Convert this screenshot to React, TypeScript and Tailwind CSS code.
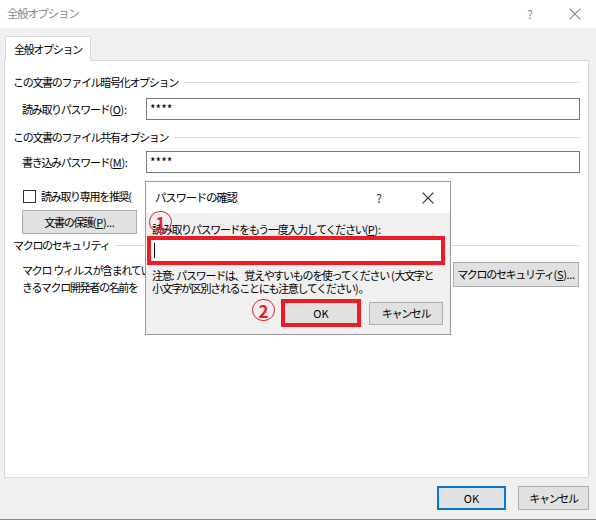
import React from "react";

const F = { fontFamily: "'Noto Sans CJK JP', 'Noto Sans', sans-serif" };

function XIcon({ size = 11, color = "#333" }: { size?: number; color?: string }) {
  return (
    <svg width={size} height={size} viewBox="0 0 10 10">
      <path d="M0.5 0.5 L9.5 9.5 M9.5 0.5 L0.5 9.5" stroke={color} strokeWidth="1" fill="none" />
    </svg>
  );
}

function A({ children }: { children: React.ReactNode }) {
  return <span className="tracking-[-0.3px]">{children}</span>;
}

function SectionHeader({ text, mt }: { text: string; mt: string }) {
  return (
    <div className={`flex items-center h-[14px] ${mt}`}>
      <span className="whitespace-nowrap leading-[14px]">{text}</span>
      <div className="flex-1 h-px bg-[#dcdcdc] ml-[6px]" />
    </div>
  );
}

function Circled({ n }: { n: string }) {
  return (
    <div className="w-[23px] h-[22px] rounded-full border border-[#ec1c24] flex items-center justify-center text-[#ec1c24] text-[17px] font-bold leading-none tracking-normal">
      {n}
    </div>
  );
}

export default function App() {
  return (
    <div
      className="relative w-[596px] h-[520px] overflow-hidden bg-[#f0f0f0] text-[11px] tracking-[-1.3px] text-black border-b border-[#8a8a8a]"
      style={F}
    >
      {/* Title bar */}
      <div className="h-[28px] bg-white flex items-center pl-[7px] pr-[6px]">
        <span className="text-[#8a8a8a] text-[11.5px]">全般オプション</span>
        <div className="ml-auto flex items-center">
          <div className="w-[30px] flex justify-center text-[#8a8a8a] text-[12px] tracking-normal">?</div>
          <div className="w-[30px] flex justify-center ml-[15px]">
            <XIcon size={12} color="#8a8a8a" />
          </div>
        </div>
      </div>

      {/* Body */}
      <div className="pl-[4px] pr-[7px] pt-[8px]">
        {/* Tab */}
        <div className="flex">
          <div className="relative z-10 ml-[1px] -mb-px h-[25px] w-[86px] bg-white border border-b-0 border-[#d9d9d9] flex items-center pl-[8px]">
            全般オプション
          </div>
        </div>
        {/* Panel */}
        <div className="h-[418px] bg-white border border-[#d9d9d9] pl-[8px] pr-[8px]">
          <SectionHeader text="この文書のファイル暗号化オプション" mt="mt-[14px]" />
          <div className="flex items-center mt-[9px] pl-[9px]">
            <span className="w-[124px] whitespace-nowrap">
              読み取りパスワード<A>(<u>O</u>):</A>
            </span>
            <div className="flex-1 h-[22px] border border-[#7a7a7a] bg-white flex items-center pl-[3px] tracking-normal text-[12px]">
              ****
            </div>
          </div>
          <SectionHeader text="この文書のファイル共有オプション" mt="mt-[10px]" />
          <div className="flex items-center mt-[7px] pl-[9px]">
            <span className="w-[124px] whitespace-nowrap">
              書き込みパスワード<A>(<u>M</u>):</A>
            </span>
            <div className="flex-1 h-[22px] border border-[#7a7a7a] bg-white flex items-center pl-[3px] tracking-normal text-[12px]">
              ****
            </div>
          </div>
          <div className="flex items-center mt-[16px] pl-[10px] h-[14px]">
            <div className="w-[13px] h-[13px] border border-[#333] bg-white" />
            <span className="ml-[5px] whitespace-nowrap">
              読み取り専用を推奨<A>(</A>
            </span>
          </div>
          <div className="mt-[7px] ml-[9px] w-[115px] h-[24px] bg-[#e1e1e1] border border-[#adadad] flex items-center justify-center">
            文書の保護<A>(<u>P</u>)...</A>
          </div>
          <SectionHeader text="マクロのセキュリティ" mt="mt-[4px]" />
          <div className="flex mt-[10px] pl-[9px]">
            <div className="flex-1 leading-[17px] whitespace-nowrap">
              <div>
                マクロ<span className="tracking-normal"> </span>ウィルスが含まれてい
              </div>
              <div>きるマクロ開発者の名前を</div>
            </div>
            <div className="w-[126px] h-[25px] bg-[#e1e1e1] border border-[#adadad] flex items-center justify-center whitespace-nowrap mr-[1px]">
              マクロのセキュリティ<A>(<u>S</u>)...</A>
            </div>
          </div>
        </div>
        {/* Bottom buttons */}
        <div className="flex justify-end mt-[8px] gap-[12px]">
          <div className="w-[69px] h-[24px] bg-[#e1e1e1] border-2 border-[#0078d7] flex items-center justify-center tracking-normal">
            OK
          </div>
          <div className="w-[71px] h-[24px] bg-[#e1e1e1] border border-[#adadad] flex items-center justify-center">
            キャンセル
          </div>
        </div>
      </div>

      {/* Password confirmation dialog */}
      <div className="absolute left-[145px] top-[181px] w-[306px] h-[154px] border border-[#9a9a9a] bg-[#f0f0f0] flex flex-col">
        <div className="h-[31px] bg-white flex items-center pl-[9px] pr-[7px]">
          <span className="text-[11.5px]">パスワードの確認</span>
          <div className="ml-auto flex items-center">
            <div className="w-[30px] flex justify-center text-[12px] tracking-normal text-[#333]">?</div>
            <div className="w-[30px] flex justify-center ml-[19px]">
              <XIcon size={12} color="#333" />
            </div>
          </div>
        </div>
        <div className="pl-[6px] mt-[10px] leading-[13px] whitespace-nowrap">
          読み取りパスワードをもう一度入力してください<A>(<u>P</u>):</A>
        </div>
        <div className="ml-[1px] w-[298px] h-[29px] border-4 border-[#ec1c24] bg-white flex items-center pl-[3px]">
          <div className="w-px h-[15px] bg-black" />
        </div>
        <div className="pl-[6px] mt-[4px] leading-[13px] whitespace-nowrap">
          <div>
            注意<A>: </A>パスワードは、覚えやすいものを使ってください<A> (</A>大文字と
          </div>
          <div>
            小文字が区別されることにも注意してください<A>)</A>。
          </div>
        </div>
        <div className="flex justify-end items-center mt-[4px] pr-[7px]">
          <div className="w-[80px] h-[28px] border-4 border-[#ec1c24] bg-[#e1e1e1] flex items-center justify-center tracking-normal">
            OK
          </div>
          <div className="ml-[8px] w-[74px] h-[23px] bg-[#e1e1e1] border border-[#adadad] flex items-center justify-center">
            キャンセル
          </div>
        </div>
      </div>

      {/* Annotations */}
      <div className="absolute left-[149px] top-[211px]">
        <Circled n="1" />
      </div>
      <div className="absolute left-[252px] top-[299px]">
        <Circled n="2" />
      </div>
    </div>
  );
}
